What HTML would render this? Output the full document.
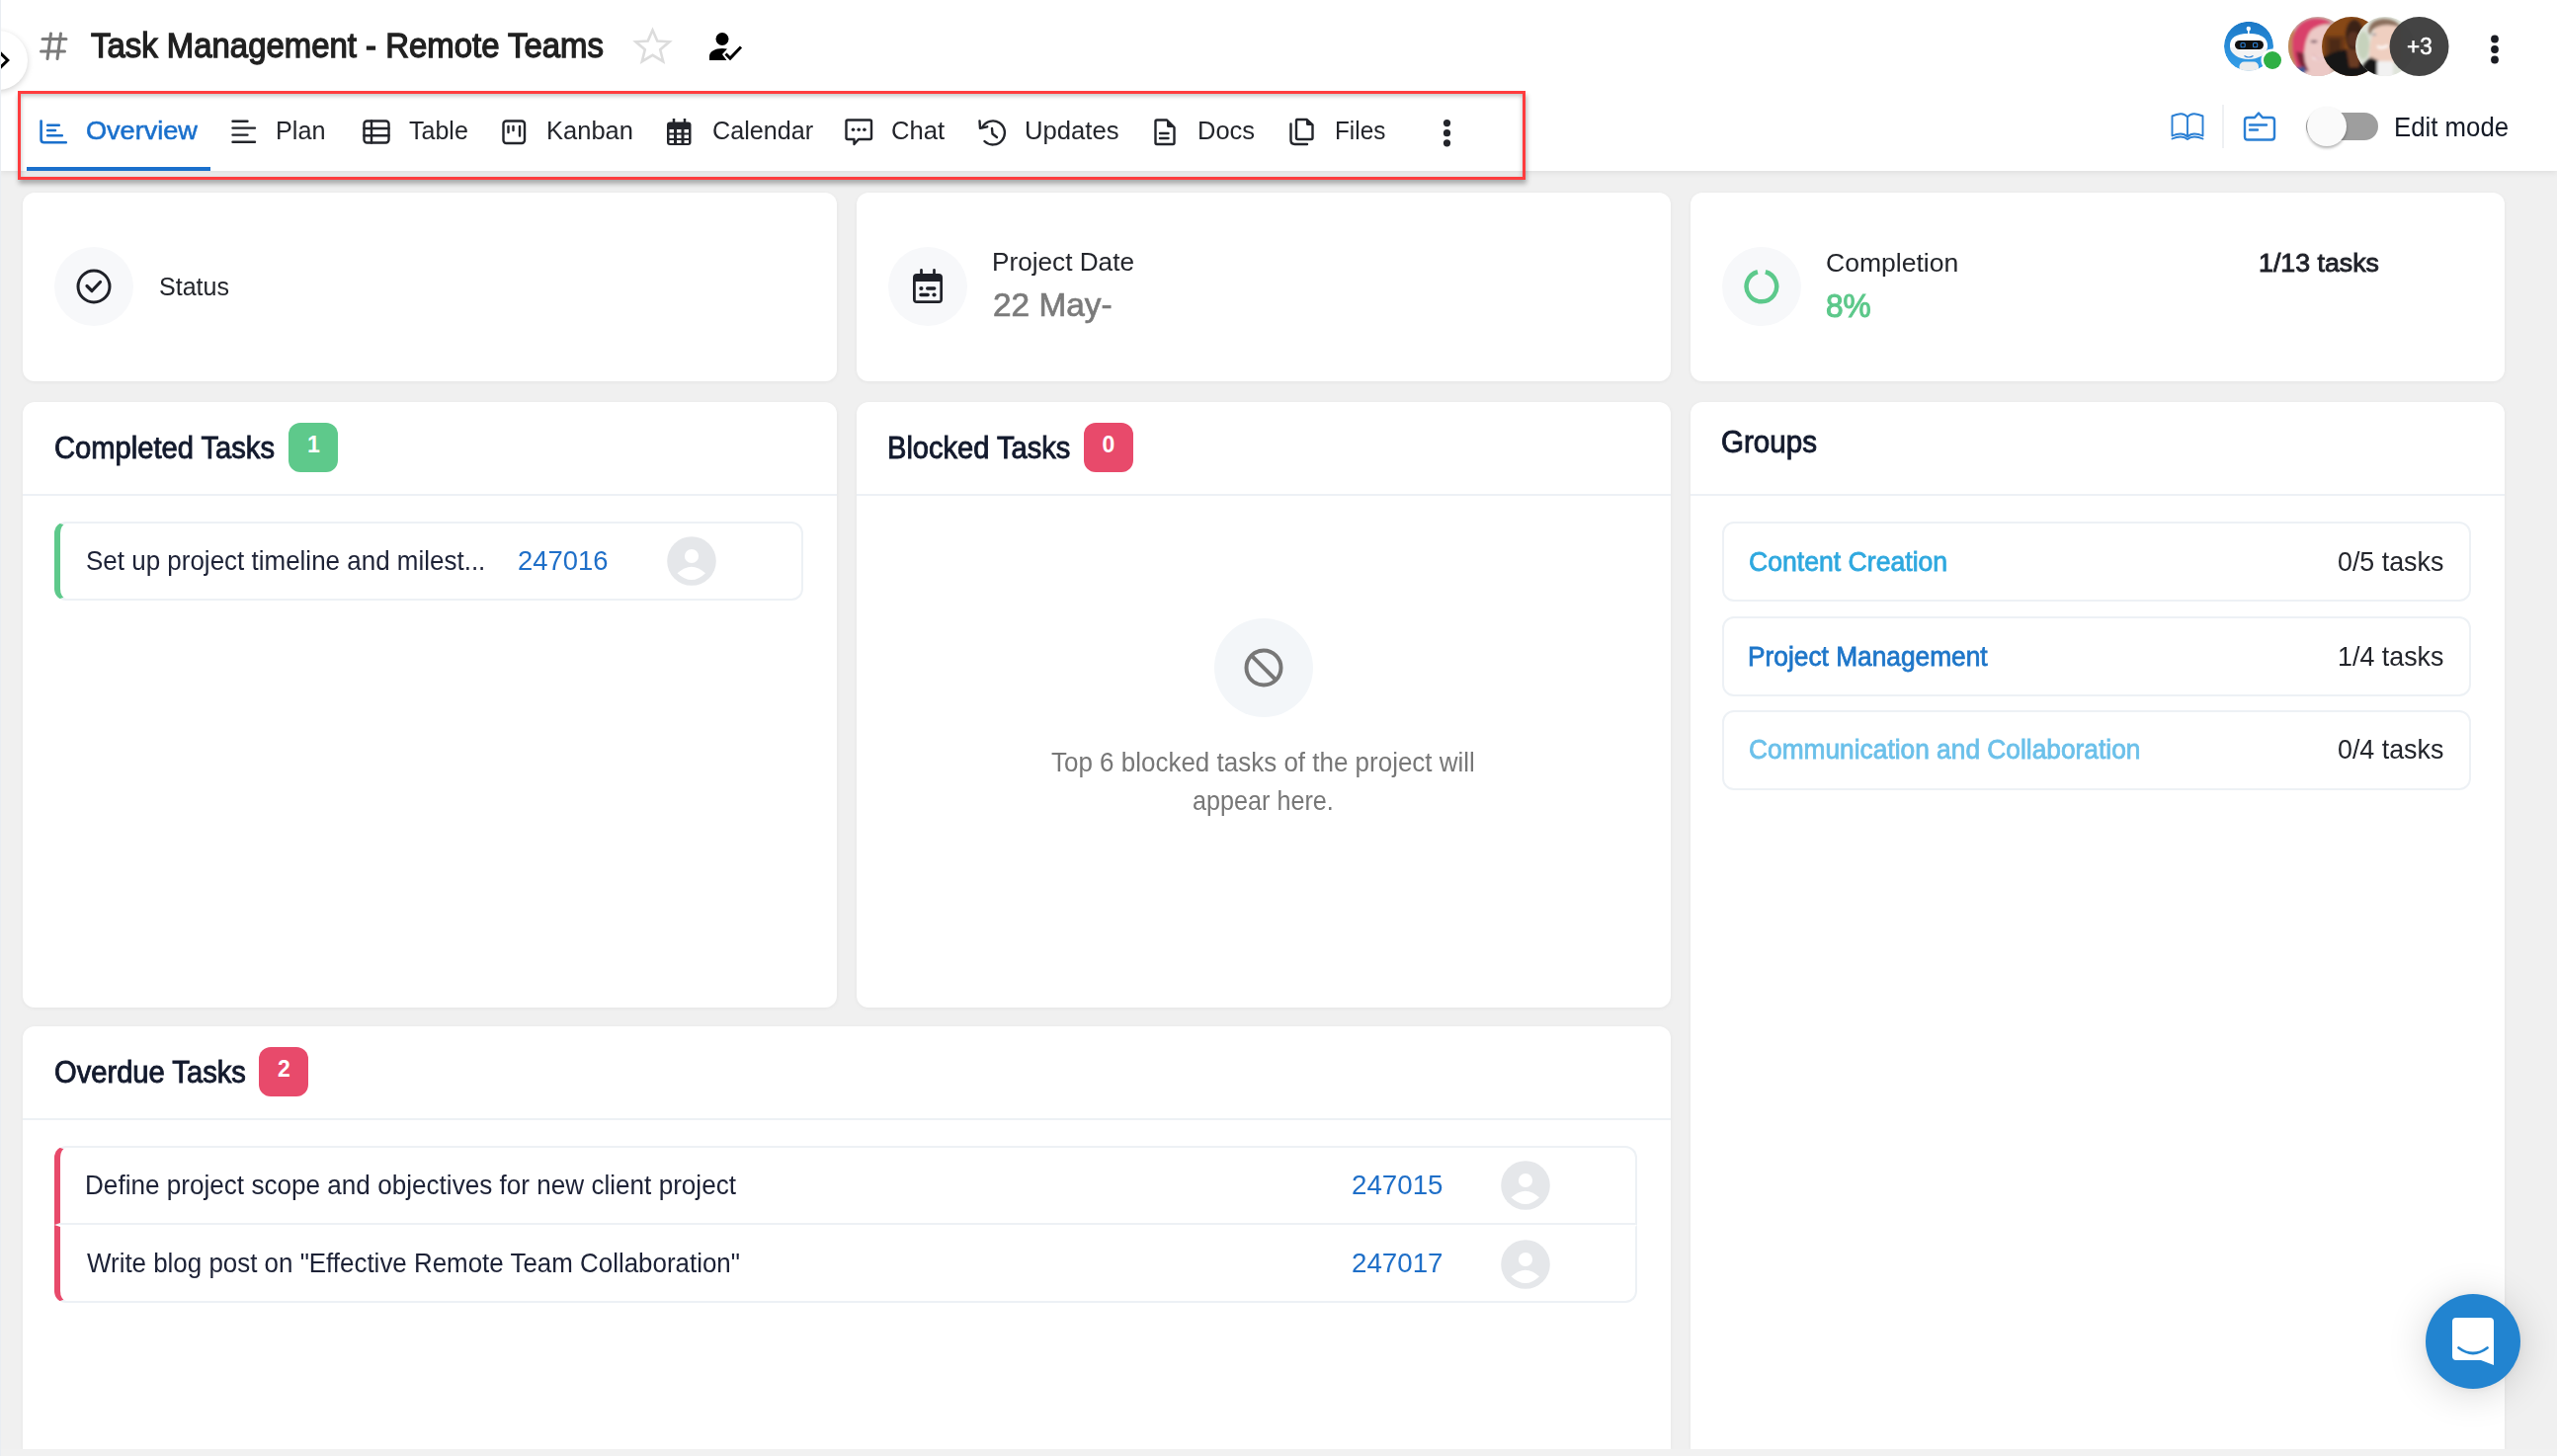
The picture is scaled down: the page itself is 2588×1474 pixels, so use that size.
<!DOCTYPE html>
<html><head><meta charset="utf-8">
<style>
*{box-sizing:border-box;margin:0;padding:0}
html,body{width:2588px;height:1474px;overflow:hidden}
body{position:relative;background:#f0f0f0;font-family:"Liberation Sans",sans-serif;color:#1f2433}
.a{position:absolute}
.t{position:absolute;white-space:nowrap;transform-origin:0 0}
svg{position:absolute;overflow:visible}
#hdr{left:0;top:0;width:2588px;height:173px;background:#fff;box-shadow:0 2px 6px rgba(0,0,0,.07)}
#strip{left:0;top:0;width:1px;height:1474px;background:#e9edf2;z-index:5}
.card{position:absolute;background:#fff;border-radius:12px;box-shadow:0 1px 4px rgba(0,0,0,.05)}
.dv{position:absolute;left:0;width:100%;height:2px;background:#edf1f5}
.ibg{position:absolute;width:80px;height:80px;border-radius:50%;background:#f7f8fa}
.badge{position:absolute;width:50px;height:50px;border-radius:12px}
.bn{color:#fff;font-weight:bold;font-size:23px;line-height:23px}
.tab{color:#23252b;font-size:26px;line-height:26px;top:119.3px}
.ct{font-size:30.5px;line-height:30.5px;color:#131a2d;-webkit-text-stroke:0.9px #131a2d}
.tk{font-size:27.5px;line-height:27.5px;color:#1d2236}
.id{font-size:28.5px;line-height:28.5px;color:#1f6fc8}
.gi{position:absolute;left:32px;width:758px;height:81px;border:2px solid #edf1f5;border-radius:12px}
.gn{font-size:28px;line-height:28px;-webkit-text-stroke:0.8px currentColor}
.gc{font-size:28px;line-height:28px;color:#23252b}
.ic{stroke:#23252b;fill:none;stroke-width:2.4;stroke-linecap:round;stroke-linejoin:round}
</style></head>
<body>
<div id="hdr" class="a"></div>
<div id="strip" class="a"></div>

<!-- collapse button -->
<div class="a" style="left:-32px;top:31px;width:60px;height:60px;border-radius:50%;background:#fff;box-shadow:0 2px 6px rgba(0,0,0,.18)"></div>
<svg style="left:0;top:50px" width="12" height="22" viewBox="0 0 12 22"><path d="M-2 1.5 L7.8 11 L-2 20.5" fill="none" stroke="#000" stroke-width="3"/></svg>

<!-- hash + title -->
<svg style="left:40px;top:32px" width="29" height="29" viewBox="0 0 29 29"><g stroke="#7a7a7a" stroke-width="3" stroke-linecap="round"><path d="M11.5 2 L8 27.5 M21.5 2 L18 27.5 M3 7.5 L27 7.5 M1.5 20 L25.5 20"/></g></svg>
<div class="t" id="title" style="left:92px;top:29.36px;font-size:34.5px;line-height:34.5px;color:#212121;-webkit-text-stroke:1.3px #212121;transform:scaleX(0.9541)">Task Management - Remote Teams</div>

<!-- star -->
<svg style="left:641px;top:28px" width="39" height="37" viewBox="0 0 39 37"><path d="M19.5 2.5 L24.3 13.6 L36.5 14.3 L27.2 22.2 L30.2 34.2 L19.5 27.8 L8.8 34.2 L11.8 22.2 L2.5 14.3 L14.7 13.6 Z" fill="none" stroke="#dcdcdc" stroke-width="2.6" stroke-linejoin="miter"/></svg>
<!-- person check -->
<svg style="left:718px;top:33px" width="33" height="28" viewBox="0 0 33 28"><circle cx="13" cy="6.5" r="6.5" fill="#000"/><path d="M0 28 L0 24 C0 19 6 16 13 16 C15 16 16.5 16.2 18 16.6 L13 22 L17.5 28 Z" fill="#000"/><path d="M16.5 21.5 L21 26 L32 14.5" fill="none" stroke="#000" stroke-width="3"/></svg>

<!-- tabs -->
<div class="a" style="left:27px;top:169px;width:186px;height:4px;background:#1a70cc"></div>
<svg style="left:40px;top:121px" width="29" height="26" viewBox="0 0 29 26"><g fill="none" stroke="#1a70cc" stroke-width="2.6" stroke-linecap="round" stroke-linejoin="round"><path d="M1.6 1.6 V20.2 Q1.6 23.2 4.6 23.2 H26.8"/><path d="M8.2 5.8 H19.8 M8.2 11 H16 M8.2 16.2 H22.8"/></g></svg>
<div class="t tab" id="tOverview" style="left:87.2px;color:#1a70cc;-webkit-text-stroke:0.55px #1a70cc;transform:scaleX(1.0419)">Overview</div>

<svg style="left:234px;top:121px" width="26" height="26" viewBox="0 0 26 26"><g class="ic"><path d="M1.5 1.8 H16.5 M1.5 8.6 H24 M1.5 15.6 H16.5 M1.5 22.8 H24"/></g></svg>
<div class="t tab" id="tPlan" style="left:279.4px;transform:scaleX(0.9710)">Plan</div>

<svg style="left:367px;top:121px" width="29" height="26" viewBox="0 0 29 26"><g class="ic"><rect x="1.5" y="1.5" width="25" height="22" rx="3"/><path d="M1.5 9 H26.5 M1.5 16.2 H26.5 M9 1.5 V23.5"/></g></svg>
<div class="t tab" id="tTable" style="left:414px;transform:scaleX(0.9631)">Table</div>

<svg style="left:508px;top:121px" width="25" height="26" viewBox="0 0 25 26"><g class="ic"><rect x="1.5" y="1.5" width="21.5" height="22.5" rx="3"/><path d="M6.5 7 V13 M11.5 7 V11 M18 7 V16.5"/></g></svg>
<div class="t tab" id="tKanban" style="left:553.4px;transform:scaleX(0.9810)">Kanban</div>

<svg style="left:675px;top:120px" width="25" height="27" viewBox="0 0 25 27"><rect x="0" y="3.5" width="24.5" height="23.5" rx="3" fill="#23252b"/><path d="M7 0 V5 M18 0 V5" stroke="#23252b" stroke-width="2.5"/><g fill="#fff"><rect x="2.5" y="11" width="4.5" height="3.5"/><rect x="10" y="11" width="4.5" height="3.5"/><rect x="17.5" y="11" width="4.5" height="3.5"/><rect x="2.5" y="16.5" width="4.5" height="3.5"/><rect x="10" y="16.5" width="4.5" height="3.5"/><rect x="17.5" y="16.5" width="4.5" height="3.5"/><rect x="2.5" y="22" width="4.5" height="3"/><rect x="10" y="22" width="4.5" height="3"/><rect x="17.5" y="22" width="4.5" height="3"/></g></svg>
<div class="t tab" id="tCalendar" style="left:721.2px;transform:scaleX(0.9691)">Calendar</div>

<svg style="left:855px;top:120px" width="29" height="28" viewBox="0 0 29 28"><g class="ic"><path d="M3 1.5 H25.5 Q27 1.5 27 3 V19.5 Q27 21 25.5 21 H14 L9.5 26 V21 H3 Q1.5 21 1.5 19.5 V3 Q1.5 1.5 3 1.5 Z"/></g><g fill="#23252b"><circle cx="8.5" cy="11.2" r="1.8"/><circle cx="14.2" cy="11.2" r="1.8"/><circle cx="19.9" cy="11.2" r="1.8"/></g></svg>
<div class="t tab" id="tChat" style="left:902.2px;transform:scaleX(0.9849)">Chat</div>

<svg style="left:990px;top:120px" width="29" height="28" viewBox="0 0 29 28"><g class="ic"><path d="M4.2 9 A12 12 0 1 1 6.5 23"/><path d="M1.5 2.5 L2 9.8 L9.2 8.3"/><path d="M14 10 L14.5 15.5 L19 19"/></g></svg>
<div class="t tab" id="tUpdates" style="left:1037.4px;transform:scaleX(0.9871)">Updates</div>

<svg style="left:1168px;top:120px" width="22" height="28" viewBox="0 0 22 28"><g class="ic"><path d="M3 1.5 H13 L20.5 9 V24.5 Q20.5 26 19 26 H3 Q1.5 26 1.5 24.5 V3 Q1.5 1.5 3 1.5 Z"/><path d="M6 15 H14.5 M6 20 H14.5"/></g><path d="M13 1.5 L20.5 9 H14.5 Q13 9 13 7.5 Z" fill="#23252b"/></svg>
<div class="t tab" id="tDocs" style="left:1212.4px;transform:scaleX(0.9802)">Docs</div>

<svg style="left:1305px;top:119px" width="26" height="29" viewBox="0 0 26 29"><g class="ic"><path d="M7.5 2 H17.5 L23.5 7.5 V20.5 Q23.5 22 22 22 H8.5 Q7 22 7 20.5 V3.5 Q7 2 8.5 2 Z"/><path d="M1.5 6.5 V23 Q1.5 27 5.5 27 H18"/></g><path d="M17 2 L23.5 8 H18.5 Q17 8 17 6.5 Z" fill="#23252b"/></svg>
<div class="t tab" id="tFiles" style="left:1351.4px;transform:scaleX(0.9343)">Files</div>

<svg style="left:1460px;top:121px" width="9" height="28" viewBox="0 0 9 28"><g fill="#23252b"><circle cx="4.5" cy="3.6" r="3.6"/><circle cx="4.5" cy="13.7" r="3.6"/><circle cx="4.5" cy="23.8" r="3.6"/></g></svg>

<!-- red annotation box -->
<div class="a" style="left:18px;top:92px;width:1526px;height:90px;border:3px solid #ff3c3e;box-shadow:1px 4px 5px rgba(0,0,0,.3), inset 0 2px 5px rgba(0,0,0,.25)"></div>

<!-- right header -->
<!-- avatars placeholder -->
<svg style="left:2240px;top:10px" width="250" height="75" viewBox="0 0 250 75">
<defs>
<linearGradient id="rg" x1="0" y1="0" x2="0" y2="1"><stop offset="0" stop-color="#1b78c6"/><stop offset="1" stop-color="#36a0ea"/></linearGradient>
<clipPath id="c1"><circle cx="106" cy="37" r="30"/></clipPath>
<clipPath id="c2"><circle cx="140" cy="37" r="30"/></clipPath>
<clipPath id="c3"><circle cx="174" cy="37" r="30"/></clipPath>
<clipPath id="cr"><circle cx="36" cy="36.7" r="25"/></clipPath>
<filter id="bl" x="-20%" y="-20%" width="140%" height="140%"><feGaussianBlur stdDeviation="1.6"/></filter>
</defs>
<g clip-path="url(#cr)">
<circle cx="36" cy="36.7" r="25" fill="url(#rg)"/>
<rect x="35" y="20" width="1.6" height="6" fill="#fff"/>
<circle cx="35.8" cy="19" r="2.2" fill="#fff"/>
<ellipse cx="36" cy="37" rx="19" ry="13" fill="#f4f4f4"/>
<path d="M17 36 Q17 24 36 24 Q55 24 55 36 L55 38 L17 38 Z" fill="#fff"/>
<rect x="22" y="31" width="29" height="9" rx="4.5" fill="#111"/>
<rect x="28" y="33.5" width="4.2" height="4.2" rx="1" fill="none" stroke="#2a7fd4" stroke-width="1.1"/>
<rect x="40.5" y="33.5" width="4.2" height="4.2" rx="1" fill="none" stroke="#2a7fd4" stroke-width="1.1"/>
<path d="M31.5 46.5 Q36 49.5 40.5 46.5" fill="none" stroke="#2a7fd4" stroke-width="1.2"/>
<rect x="26.5" y="52.5" width="19.5" height="12" rx="5" fill="#ececec"/>
</g>
<circle cx="60" cy="51" r="11.5" fill="#fff"/>
<circle cx="60" cy="51" r="9" fill="#2fb044"/>
<g clip-path="url(#c1)">
<rect x="70" y="0" width="80" height="75" fill="#c9b3a8"/>
<g filter="url(#bl)">
<rect x="72" y="20" width="10" height="50" fill="#c08a58"/>
<path d="M91 17 Q104 13 118 16 L120 70 L92 70 Q90 40 91 17 Z" fill="#ecc9c6"/>
<path d="M80 30 Q84 12 100 9 Q114 8 120 14 Q106 14 98 22 Q93 30 92 44 Q92 54 97 62 L86 62 Q79 48 80 30 Z" fill="#d9416a"/>
<path d="M84 42 Q86 56 92 62 L97 62 Q92 54 92 44 Z" fill="#7a2238"/>
<ellipse cx="102" cy="32" rx="3.5" ry="1.3" fill="#6a4a5a"/>
<path d="M101 47.5 Q107 51.5 113 48" stroke="#fff" stroke-width="2.4" fill="none"/>
<path d="M101 46 Q107 53 113 47" stroke="#c86a7a" stroke-width="1" fill="none"/>
<rect x="84" y="58" width="9" height="8" fill="#3a5a9a"/>
</g>
</g>
<g clip-path="url(#c2)">
<rect x="100" y="0" width="80" height="75" fill="#874816"/>
<g filter="url(#bl)">
<rect x="113" y="26" width="20" height="20" fill="#6a3814"/>
<rect x="117" y="29" width="12" height="16" fill="#4e2a14"/>
<ellipse cx="143" cy="26" rx="9" ry="16" fill="#3a2016"/>
<ellipse cx="142" cy="30" rx="6" ry="8" fill="#5a3020"/>
<path d="M134 40 L148 40 L147 58 L136 58 Z" fill="#6a3a24"/>
<path d="M108 50 Q124 40 135 40 L138 58 L147 58 L150 40 Q160 44 170 50 L170 80 L108 80 Z" fill="#141414"/>
</g>
</g>
<g clip-path="url(#c3)">
<rect x="140" y="0" width="80" height="75" fill="#dfe4da"/>
<g filter="url(#bl)">
<ellipse cx="152" cy="36" rx="6" ry="14" fill="#c6d2bc"/>
<path d="M158 50 Q158 18 170 14 Q182 12 190 18 L190 52 Q176 56 158 50 Z" fill="#efcfc0"/>
<path d="M157 22 Q158 10 172 9 Q186 9 190 18 Q180 14 170 16 Q160 18 159 26 Z" fill="#8a6e5c"/>
<ellipse cx="163" cy="25" rx="2" ry="1" fill="#7a8a9a"/>
<path d="M166 37 Q171 40 177 36" stroke="#fff" stroke-width="2.2" fill="none"/>
<path d="M146 80 Q148 54 160 48 L168 52 L168 80 Z" fill="#141414"/>
<rect x="166" y="52" width="16" height="30" fill="#f2f2f2"/>
</g>
</g>
<circle cx="208.5" cy="37" r="30" fill="#363636" fill-opacity=".93"/>
</svg>
<div class="t" id="tPlus3" style="left:2435.5px;top:35px;font-size:24.5px;line-height:24.5px;color:#fff;-webkit-text-stroke:0.5px #fff;transform:scaleX(0.92)">+3</div>

<svg style="left:2520px;top:35px" width="10" height="30" viewBox="0 0 10 30"><g fill="#1a1c22"><circle cx="5" cy="4.5" r="3.9"/><circle cx="5" cy="15" r="3.9"/><circle cx="5" cy="25.5" r="3.9"/></g></svg>

<svg style="left:2197px;top:114px" width="34" height="28" viewBox="0 0 34 28"><g fill="none" stroke="#2a7fd4" stroke-width="1.9" stroke-linejoin="round" stroke-linecap="round"><path d="M17 4.5 Q14 1 10 1.3 Q6 1.6 1.5 3.5 V23.5 Q6 21.5 10 21.5 Q14 21.5 17 24.5 Q20 21.5 24 21.5 Q28 21.5 32.5 23.5 V3.5 Q28 1.6 24 1.3 Q20 1 17 4.5 Z"/><path d="M17 5.5 V24"/><path d="M1.5 26.5 Q6 24.5 10 24.5 Q14 24.5 17 27 Q20 24.5 24 24.5 Q28 24.5 32.5 26.5"/></g></svg>
<div class="a" style="left:2249px;top:106px;width:2px;height:44px;background:#eef0f3"></div>
<svg style="left:2270px;top:113px" width="34" height="30" viewBox="0 0 34 30"><g fill="none" stroke="#2a7fd4" stroke-width="2.4" stroke-linecap="round" stroke-linejoin="round"><path d="M5 6 H12 L16 1.5 L20 6 H29 Q32 6 32 9 V25.5 Q32 28.5 29 28.5 H5 Q2 28.5 2 25.5 V9 Q2 6 5 6 Z"/><path d="M7 13.5 H24 M7 18.5 H15"/></g></svg>
<div class="a" style="left:2334px;top:114px;width:73px;height:28px;border-radius:14px;background:#9e9e9e"></div>
<div class="a" style="left:2335px;top:108px;width:40px;height:40px;border-radius:50%;background:#fafafa;box-shadow:0 2px 3px rgba(0,0,0,.3)"></div>
<div class="t" id="tEdit" style="left:2423.4px;top:114.7px;font-size:27.6px;line-height:27.6px;color:#141a26;transform:scaleX(0.9343)">Edit mode</div>

<!-- ROW 1 cards -->
<div class="card" style="left:23px;top:195px;width:824px;height:191px">
  <div class="ibg" style="left:32px;top:55px"></div>
  <svg style="left:54px;top:77px" width="36" height="36" viewBox="0 0 36 36"><circle cx="18" cy="18" r="16" fill="none" stroke="#1f2128" stroke-width="3"/><path d="M11 17.5 L16 22.5 L24.5 13.5" fill="none" stroke="#1f2128" stroke-width="3.2" stroke-linecap="round" stroke-linejoin="round"/></svg>
</div>
<div class="t" id="tStatus" style="left:160.98px;top:278.48px;font-size:25.8px;line-height:25.8px;color:#23252b;transform:scaleX(0.9703)">Status</div>

<div class="card" style="left:867px;top:195px;width:824px;height:191px">
  <div class="ibg" style="left:32px;top:55px"></div>
  <svg style="left:56px;top:77px" width="33" height="36" viewBox="0 0 33 36"><path fill="#1f2128" fill-rule="evenodd" d="M5 4.9 H27 Q31 4.9 31 8.9 V31 Q31 35 27 35 H5 Q1 35 1 31 V8.9 Q1 4.9 5 4.9 Z M3.8 12.9 V32.2 H28.3 V12.9 Z"/><path d="M9.5 1.3 V6 M22.5 1.3 V6" stroke="#1f2128" stroke-width="2.7" stroke-linecap="round"/><g fill="#1f2128"><circle cx="9.4" cy="20" r="2.1"/><rect x="14" y="18.3" width="10.4" height="3.4" rx="1.7"/><rect x="7.3" y="24.8" width="10.5" height="3.4" rx="1.7"/><circle cx="22.5" cy="26.5" r="2.1"/></g></svg>
</div>
<div class="t" id="tPDate" style="left:1004.4px;top:252.35px;font-size:26.5px;line-height:26.5px;color:#23252b;transform:scaleX(0.9872)">Project Date</div>
<div class="t" id="tMay" style="left:1005.2px;top:291.85px;font-size:33px;line-height:33px;color:#7b7b7b;-webkit-text-stroke:0.7px #7b7b7b;transform:scaleX(1.0112)">22 May-</div>

<div class="card" style="left:1711px;top:195px;width:824px;height:191px">
  <div class="ibg" style="left:32px;top:55px"></div>
  <svg style="left:54px;top:77px" width="37" height="37" viewBox="0 0 37 37"><path d="M21.86 3.22 A15.3 15.3 0 1 1 13.94 3.22" fill="none" stroke="#5cc98b" stroke-width="4.5"/></svg>
</div>
<div class="t" id="tCompl" style="left:1848.2px;top:252.55px;font-size:26.5px;line-height:26.5px;color:#23252b;transform:scaleX(1.0016)">Completion</div>
<div class="t" id="tPct" style="left:1848.2px;top:291.5px;font-size:34px;line-height:34px;color:#5cc88a;-webkit-text-stroke:1.1px #5cc88a;transform:scaleX(0.9296)">8%</div>
<div class="t" id="tTasks" style="left:2286.2px;top:252.55px;font-size:26.5px;line-height:26.5px;color:#1f2128;-webkit-text-stroke:0.9px #1f2128;transform:scaleX(1.0100)">1/13 tasks</div>

<!-- ROW 2 -->
<div class="card" style="left:23px;top:407px;width:824px;height:613px"><div class="dv" style="top:92.5px"></div></div>
<div class="t ct" id="tCompleted" style="left:55.2px;top:437.85px;transform:scaleX(0.9553)">Completed Tasks</div>
<div class="badge" style="left:292px;top:428px;background:#5ec98b"></div>
<div class="t bn" id="b1" style="left:311px;top:439px">1</div>
<!-- completed task item -->
<div class="a" style="left:55px;top:528px;width:758px;height:80px;border:2px solid #edf1f5;border-left:6px solid #5ec98b;border-radius:12px"></div>
<div class="t tk" id="tSetup" style="left:87.2px;top:553.67px;transform:scaleX(0.9447)">Set up project timeline and milest...</div>
<div class="t id" id="t247016" style="left:524.3px;top:552.82px;transform:scaleX(0.9619)">247016</div>
<svg style="left:675px;top:543px" width="50" height="50" viewBox="0 0 50 50"><circle cx="25" cy="25" r="24.8" fill="#e5e7ea"/><circle cx="25" cy="20" r="7.1" fill="#fff"/><path d="M10.5 37.3 Q25 24.1 39 37.3 Q25 50.9 10.5 37.3 Z" fill="#fff"/></svg>

<div class="card" style="left:867px;top:407px;width:824px;height:613px"><div class="dv" style="top:92.5px"></div></div>
<div class="t ct" id="tBlocked" style="left:898.4px;top:437.85px;transform:scaleX(0.9528)">Blocked Tasks</div>
<div class="badge" style="left:1097px;top:428px;background:#e84a6b"></div>
<div class="t bn" id="b0" style="left:1115.5px;top:439px">0</div>
<div class="a" style="left:1229px;top:626px;width:100px;height:100px;border-radius:50%;background:#f3f6f9"></div>
<svg style="left:1259px;top:656px" width="40" height="40" viewBox="0 0 40 40"><g fill="none" stroke="#777" stroke-width="4"><circle cx="20" cy="20" r="17.5"/><path d="M8 8 L32 32"/></g></svg>
<div class="t" id="tEmpty1" style="left:1064.1px;top:757.67px;font-size:27.5px;line-height:27.5px;color:#777;transform:scaleX(0.9447)">Top 6 blocked tasks of the project will</div>
<div class="t" id="tEmpty2" style="left:1207.2px;top:796.67px;font-size:27.5px;line-height:27.5px;color:#777;transform:scaleX(0.9155)">appear here.</div>

<div class="card" style="left:1711px;top:407px;width:824px;height:1060px;border-radius:12px 12px 0 0"><div class="dv" style="top:93px"></div>
  <div class="gi" style="top:121px"></div>
  <div class="gi" style="top:217px"></div>
  <div class="gi" style="top:312px"></div>
</div>
<div class="t ct" id="tGroups" style="left:1742.2px;top:432.45px;transform:scaleX(0.9698)">Groups</div>
<div class="t gn" id="tG1" style="left:1770.2px;top:555.25px;color:#2ea8df;transform:scaleX(0.9503)">Content Creation</div>
<div class="t gc" id="tG1c" style="left:2366.2px;top:555.25px;transform:scaleX(0.9577)">0/5 tasks</div>
<div class="t gn" id="tG2" style="left:1769.4px;top:651.25px;color:#1e76c9;transform:scaleX(0.9392)">Project Management</div>
<div class="t gc" id="tG2c" style="left:2366.4px;top:651.25px;transform:scaleX(0.9584)">1/4 tasks</div>
<div class="t gn" id="tG3" style="left:1770.2px;top:745.25px;color:#6bc0ea;transform:scaleX(0.9398)">Communication and Collaboration</div>
<div class="t gc" id="tG3c" style="left:2366.2px;top:745.25px;transform:scaleX(0.9577)">0/4 tasks</div>

<!-- Overdue -->
<div class="card" style="left:23px;top:1039px;width:1668px;height:428px;border-radius:12px 12px 0 0"><div class="dv" style="top:93px"></div></div>
<div class="t ct" id="tOverdue" style="left:55.2px;top:1069.85px;transform:scaleX(0.9555)">Overdue Tasks</div>
<div class="badge" style="left:262px;top:1060px;background:#e84a6b"></div>
<div class="t bn" id="b2" style="left:281px;top:1071px">2</div>
<div class="a" style="left:55px;top:1160px;width:1602px;height:80px;border:2px solid #edf1f5;border-left:6px solid #e84a6b;border-radius:12px 12px 0 0"></div>
<div class="a" style="left:55px;top:1240px;width:1602px;height:79px;border:2px solid #edf1f5;border-top-color:#fff;border-left:6px solid #e84a6b;border-radius:0 0 12px 12px"></div>
<div class="t tk" id="tO1" style="left:86.4px;top:1185.57px;transform:scaleX(0.9496)">Define project scope and objectives for new client project</div>
<div class="t id" id="t247015" style="left:1368.2px;top:1184.72px;transform:scaleX(0.9725)">247015</div>
<div class="t tk" id="tO2" style="left:88px;top:1264.77px;transform:scaleX(0.9425)">Write blog post on "Effective Remote Team Collaboration"</div>
<svg style="left:1519px;top:1255px" width="50" height="50" viewBox="0 0 50 50"><circle cx="25" cy="25" r="24.8" fill="#e5e7ea"/><circle cx="25" cy="20" r="7.1" fill="#fff"/><path d="M10.5 37.3 Q25 24.1 39 37.3 Q25 50.9 10.5 37.3 Z" fill="#fff"/></svg>
<svg style="left:1519px;top:1175px" width="50" height="50" viewBox="0 0 50 50"><circle cx="25" cy="25" r="24.8" fill="#e5e7ea"/><circle cx="25" cy="20" r="7.1" fill="#fff"/><path d="M10.5 37.3 Q25 24.1 39 37.3 Q25 50.9 10.5 37.3 Z" fill="#fff"/></svg>
<div class="t id" id="t247017" style="left:1368.2px;top:1263.92px;transform:scaleX(0.9725)">247017</div>

<div class="a" style="left:0;top:1467px;width:2588px;height:7px;background:#f1f1f1"></div>
<!-- intercom -->
<div class="a" style="left:2455px;top:1310px;width:96px;height:96px;border-radius:50%;background:#2284d0;box-shadow:0 4px 40px rgba(0,0,0,.16), 0 1px 6px rgba(0,0,0,.06)"></div>
<svg style="left:2480px;top:1333px" width="46" height="50" viewBox="0 0 46 50"><path d="M6 1 H40 Q44 1 44 5 V49 L31 44 H6 Q2 44 2 40 V5 Q2 1 6 1 Z" fill="#fff"/><path d="M8.5 31.5 Q23 42.5 37.5 31.5" fill="none" stroke="#2284d0" stroke-width="2.8" stroke-linecap="round"/></svg>

</body></html>
